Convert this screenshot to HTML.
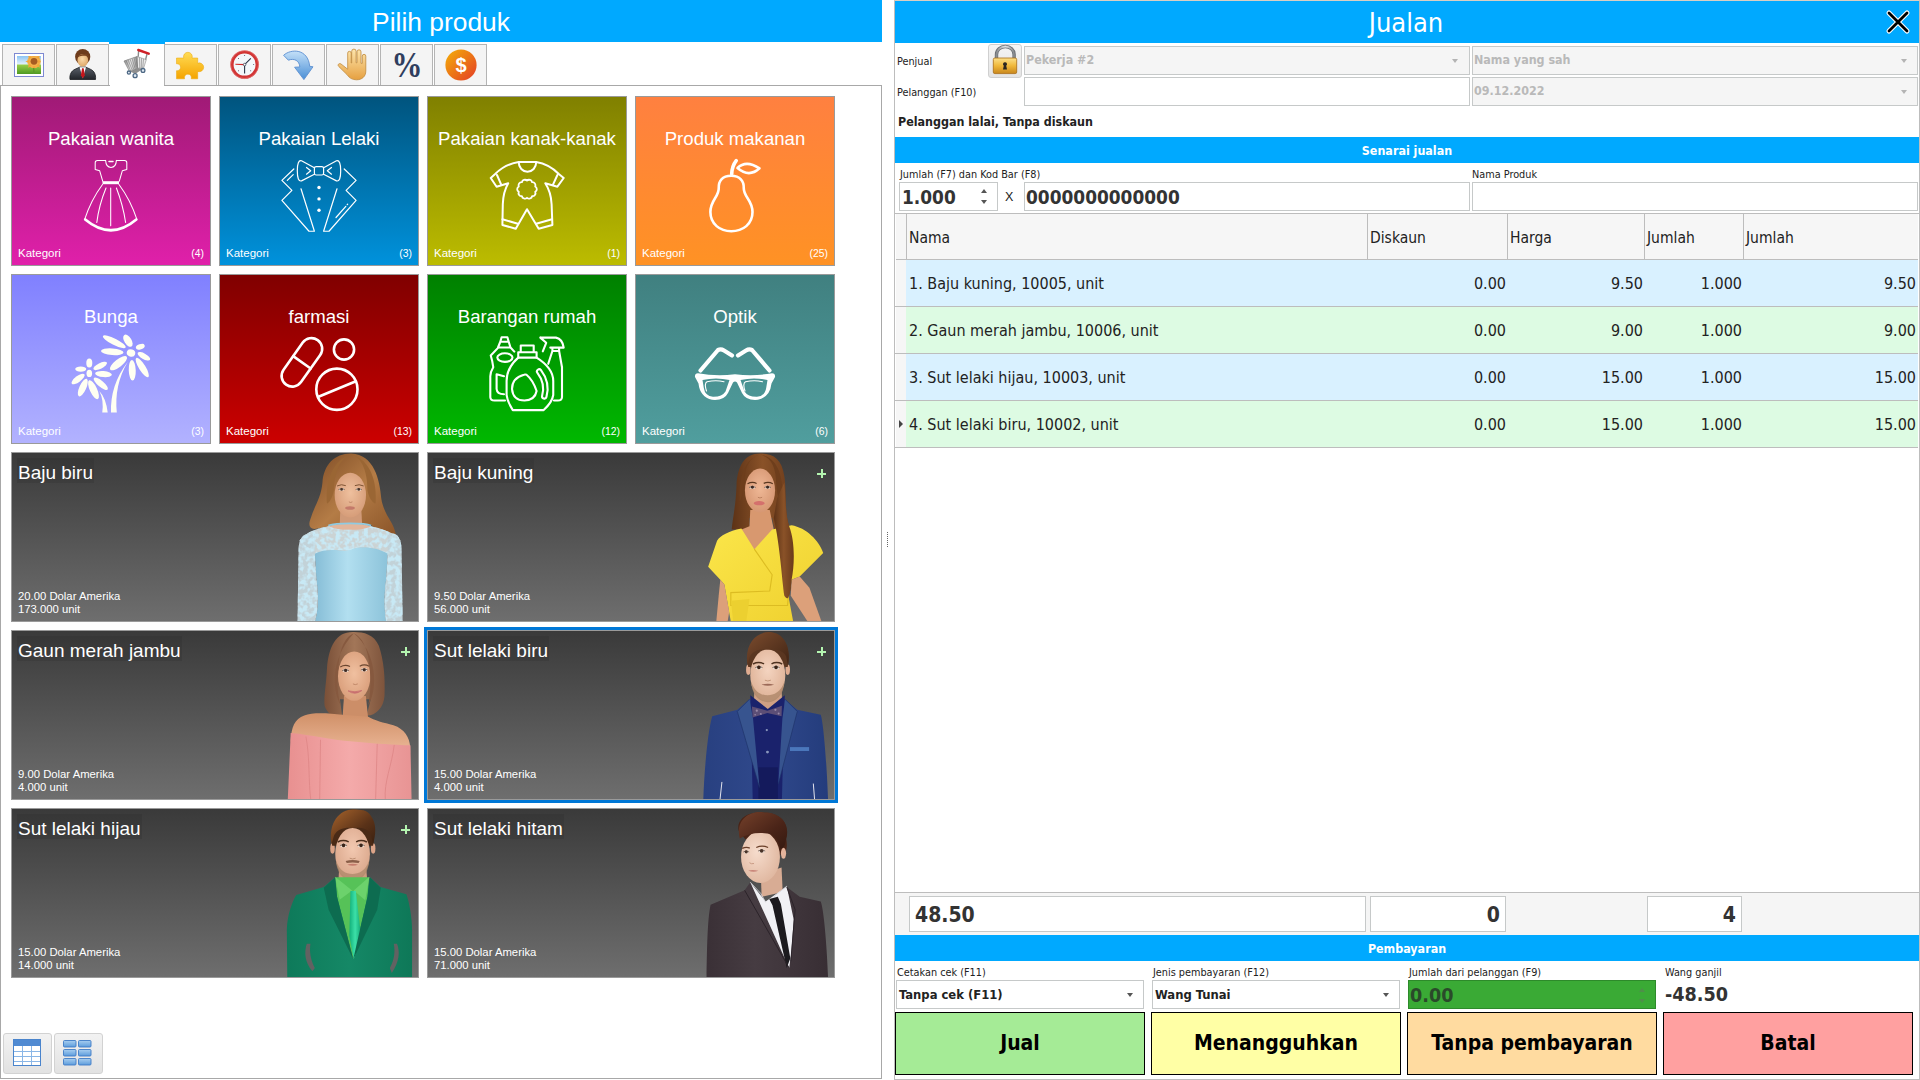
<!DOCTYPE html>
<html lang="ms">
<head>
<meta charset="utf-8">
<title>Jualan</title>
<style>
*{box-sizing:border-box;margin:0;padding:0}
html,body{width:1920px;height:1080px;overflow:hidden;background:#fff}
body{position:relative;font-family:"DejaVu Sans Condensed","Liberation Sans",sans-serif;color:#222;font-size:11px}
.abs,.abs>*{position:absolute}
.abs{left:0;top:0}
.t{white-space:nowrap;line-height:1}
.seg{font-family:"Liberation Sans",sans-serif}
.blue{background:#00a9ff}
/* left */
.tab{top:44px;width:53px;height:41px;background:#f4f4f4;border:1px solid #b4b4b4;border-bottom:none}
.cat{width:200px;height:170px;border:1px solid #9a9a9a;color:#fff;font-family:"Liberation Sans",sans-serif}
.cat .nm{position:absolute;left:0;width:198px;text-align:center;top:31px;font-size:18.6px;line-height:22px;white-space:nowrap}
.cat .kg{position:absolute;left:6px;top:150px;font-size:11.5px;line-height:12px}
.cat .ct{position:absolute;right:6px;top:151px;font-size:10.4px;line-height:12px}
.cat svg{position:absolute;left:59px;top:58px;width:80px;height:84px}
.prod{width:408px;height:170px;border:1px solid #9a9a9a;color:#fff;background:linear-gradient(#3a3a3a,#6e6e6e);font-family:"Liberation Sans",sans-serif;overflow:hidden}
.prod .nm{position:absolute;left:5px;top:5px;height:25px;font-size:19px;line-height:30px;white-space:nowrap;background:rgba(40,40,40,.22);padding:0 1px}
.prod .pr{position:absolute;left:6px;top:137px;font-size:11.3px;line-height:13px;white-space:nowrap}
.prod .plus{position:absolute;left:389px;top:16px;width:9px;height:9px}
.prod .plus:before{content:"";position:absolute;left:0;top:3.5px;width:9px;height:2px;background:#b4f5b0}
.prod .plus:after{content:"";position:absolute;left:3.5px;top:0;width:2px;height:9px;background:#b4f5b0}
.prod svg.ph{position:absolute;top:0;height:168px}
/* right */
.inp{background:#fff;border:1px solid #c6c9c9}
.dis{background:#f5f5f5;border:1px solid #c6c9c9}
.lbl{font-size:10.8px;color:#222;white-space:nowrap;line-height:13px}
.arr{width:0;height:0;border-left:3.5px solid transparent;border-right:3.5px solid transparent;border-top:4px solid #555}
.arr.g{border-top-color:#b4b4b4}
.hd{font-size:15.5px;line-height:18px;color:#222;white-space:nowrap}
.row{left:906px;width:1012px;height:46px}
.cell{font-size:16px;line-height:20px;white-space:nowrap;color:#222}
.r{text-align:right}
.btn{top:1012px;width:250px;height:63px;border:1px solid #000;font-weight:bold;font-size:21px;line-height:61px;text-align:center;color:#000}
</style>
</head>
<body>
<!-- ================= LEFT PANEL ================= -->
<div class="abs" id="left">
  <div class="blue" style="left:0;top:0;width:882px;height:42px"></div>
  <div class="t seg" style="left:0;top:6px;width:882px;text-align:center;color:#fff;font-size:26.4px;line-height:32px">Pilih produk</div>
  <div class="blue" style="left:109px;top:42px;width:56px;height:2px"></div>
  <div style="left:0;top:85px;width:882px;height:994px;border:1px solid #a8a8a8"></div>
  <div id="tabs" class="abs">
    <div class="tab" style="left:2px"></div>
    <div class="tab" style="left:56px"></div>
    <div class="tab" style="left:110px;width:54px;background:#fff;border:none;height:43px"></div>
    <div class="tab" style="left:164px"></div>
    <div class="tab" style="left:218px"></div>
    <div class="tab" style="left:272px"></div>
    <div class="tab" style="left:326px"></div>
    <div class="tab" style="left:380px"></div>
    <div class="tab" style="left:434px"></div>
  </div>
  <svg id="tabicons" style="left:0;top:44px" width="490" height="42" viewBox="0 44 490 42">
    <defs>
      <linearGradient id="gsky" x1="0" y1="0" x2="0" y2="1"><stop offset="0" stop-color="#8cc4f2"/><stop offset="1" stop-color="#eaf5ff"/></linearGradient>
      <linearGradient id="ggrass" x1="0" y1="0" x2="0" y2="1"><stop offset="0" stop-color="#9ad04a"/><stop offset="1" stop-color="#4e9a22"/></linearGradient>
      <linearGradient id="gsuit" x1="0" y1="0" x2="0" y2="1"><stop offset="0" stop-color="#5a606a"/><stop offset="1" stop-color="#22252a"/></linearGradient>
      <radialGradient id="gface" cx=".45" cy=".4" r=".7"><stop offset="0" stop-color="#fbd9a8"/><stop offset="1" stop-color="#d9a060"/></radialGradient>
      <linearGradient id="gpuz" x1="0" y1="0" x2="0" y2="1"><stop offset="0" stop-color="#ffdc55"/><stop offset="1" stop-color="#f5a400"/></linearGradient>
      <linearGradient id="garrow" x1="0" y1="0" x2="0" y2="1"><stop offset="0" stop-color="#c4e0f8"/><stop offset="1" stop-color="#4a8fd6"/></linearGradient>
      <linearGradient id="ghand" x1="0" y1="0" x2="0" y2="1"><stop offset="0" stop-color="#fde6ae"/><stop offset="1" stop-color="#e6a040"/></linearGradient>
      <linearGradient id="gcoin" x1="0" y1="0" x2="1" y2="1"><stop offset="0" stop-color="#f4b008"/><stop offset="1" stop-color="#e43c26"/></linearGradient>
      <linearGradient id="gcart" x1="0" y1="0" x2="1" y2="0"><stop offset="0" stop-color="#8a8a8a"/><stop offset=".5" stop-color="#e8e8e8"/><stop offset="1" stop-color="#9a9a9a"/></linearGradient>
    </defs>
    <!-- picture -->
    <rect x="14.5" y="53.5" width="29" height="23" fill="#fff" stroke="#7d89d2"/>
    <rect x="17" y="56" width="24" height="9" fill="url(#gsky)"/>
    <rect x="17" y="64.5" width="24" height="9.5" fill="url(#ggrass)"/>
    <clipPath id="cpic"><rect x="17" y="56" width="24" height="18"/></clipPath><g fill="#f2a53a" clip-path="url(#cpic)"><circle cx="34" cy="61.5" r="6.8" fill="#f4b24a"/><path d="M34 52.8l1.6 4h-3.2zM34 70.2l1.6-4h-3.2zM25.3 61.5l4 1.6v-3.2zM41 61.5l-3 1.6v-3.2zM27.8 55.3l4 1.8-2.2 2.2zM40.2 55.3l-4 1.8 2.2 2.2zM27.8 67.7l4-1.8-2.2-2.2zM40.2 67.7l-4-1.8 2.2-2.2z"/></g>
    <circle cx="34" cy="61.3" r="3.4" fill="#a65c22"/>
    <rect x="33" y="68" width="1.6" height="6" fill="#5c9a2a"/>
    <!-- person -->
    <path d="M70 79.5c-.6-5 1.4-8.600 5-10.200l5-2.300h5.500l5 2.300c3.600 1.600 5.600 5.200 5 10.200z" fill="url(#gsuit)" stroke="#1c1e22" stroke-width=".8"/>
    <path d="M79.600 67.200l3.200 11 3.200-11z" fill="#fff"/>
    <path d="M82 68.200h1.700l1.100 7-1.950 3.300-1.950-3.300z" fill="#c4161c"/>
    <ellipse cx="82.700" cy="56.800" rx="7.600" ry="7.700" fill="#6e3c1c"/>
    <ellipse cx="82.800" cy="60.300" rx="5.300" ry="6.300" fill="url(#gface)"/>
    <path d="M76.500 58c2-3.500 6-4.500 9.500-4 2 .5 3 2 3.200 4-2-2-4-2.500-6.500-2.200-2.600.3-4.500 1-6.200 2.200z" fill="#7a4420"/>
    <!-- cart -->
    <path d="M129.500 71.500L137.500 68L143.500 68.500L135.500 73.800Z" fill="#8e8e8e"/>
    <path d="M137 56.500L146.300 59.600L143.500 68.500L137.500 68Z" fill="#e9e9e9" stroke="#8a8a8a" stroke-width=".6"/>
    <path d="M124 61L137 56.500L137.500 68L129.500 71.500Z" fill="url(#gcart)" stroke="#777" stroke-width=".6"/>
    <path d="M126 60.400l4.800 10.600M128 59.700l4.200 10.300M130 59l3.600 10.100M132 58.300l3 9.900M134 57.600l2.300 9.800M135.800 57l1.400 9.500M139.500 57.500l.3 10.600M141.500 58.200l-.2 10.200M143.500 58.900l-.8 9.500" stroke="#6f6f6f" stroke-width=".55" fill="none"/>
    <path d="M138.600 50.900L138.200 56.800M147 54L145.600 59.600" stroke="#8c8c8c" stroke-width="1.400" fill="none"/>
    <path d="M138.300 50L148.700 53.600" stroke="#cf2027" stroke-width="2.500" stroke-linecap="round"/>
    <g fill="#dfe9f2" stroke="#4d6884" stroke-width="1.300"><circle cx="135.100" cy="75.700" r="2"/><circle cx="143" cy="70.400" r="1.900"/><circle cx="128.900" cy="72.600" r="1.600"/></g>
    <!-- puzzle -->
    <path d="M176.500 58h7.200a4.400 4.400 0 1 1 8.400 0h5.600v5.200a4.400 4.400 0 1 1 0 8.200v7.400h-6.500a3.500 3.500 0 1 0-6.600 0h-8.100v-8.100a3.500 3.500 0 1 0 0-6.900z" fill="url(#gpuz)" stroke="#eaa400" stroke-width=".5"/>
    <!-- clock -->
    <circle cx="244.600" cy="64.600" r="12.600" fill="#f3f7fb" stroke="#d23636" stroke-width="3.200"/>
    <circle cx="244.600" cy="64.600" r="14" fill="none" stroke="#e88080" stroke-width=".6"/>
    <path d="M244.600 64.600L235.400 64.300" stroke="#d02828" stroke-width="1.100"/>
    <path d="M244.600 64.600L250.800 58.400M244.600 64.600V73.400" stroke="#2a3548" stroke-width="1.100"/>
    <circle cx="244.600" cy="64.600" r="1.300" fill="#fff" stroke="#2a3548" stroke-width=".7"/>
    <g fill="#445"><circle cx="244.600" cy="55.500" r=".5"/><circle cx="253.700" cy="64.600" r=".5"/><circle cx="238.500" cy="58.500" r=".5"/><circle cx="238.500" cy="70.700" r=".5"/><circle cx="250.700" cy="70.700" r=".5"/></g>
    <!-- arrow -->
    <path d="M283.600 55.300C291 48.500 308 48.500 309.700 66.300L313 66.800L303.900 79.600L294.600 67.200L299.800 67C299.500 60.500 294 58 288.400 60.200Z" fill="url(#garrow)" stroke="#5b8fd0" stroke-width=".9" stroke-linejoin="round"/>
    <!-- hand -->
    <path d="M347.700 66v-12.900a1.750 1.750 0 0 1 3.500 0v9.900h.5v-11.700a2.200 2.200 0 0 1 4.400 0v11.500h.9v-11a2 2 0 0 1 4 0v11.500h1.300v-7.200a1.750 1.750 0 0 1 3.500 0v14.900c0 5.500-3.800 8.800-9.300 8.800-4.500 0-7.300-2-9.500-5.200l-8.300-8.200c-1.500-1.600 .3-3.600 2.200-2.500l6.800 5.300z" fill="url(#ghand)" stroke="#c08a3c" stroke-width=".8" stroke-linejoin="round"/>
    <!-- percent -->
    <text x="407" y="76.500" text-anchor="middle" font-family="Liberation Serif,serif" font-weight="bold" font-size="35" fill="#303e5e" textLength="31" lengthAdjust="spacingAndGlyphs">%</text>
    <!-- coin -->
    <circle cx="461" cy="65" r="15.600" fill="url(#gcoin)"/>
    <text x="461" y="72.300" text-anchor="middle" font-family="Liberation Sans,sans-serif" font-weight="bold" font-size="20" fill="#fff">$</text>
  </svg>
  <div id="cats" class="abs">
    <div class="cat" style="left:11px;top:96px;background:linear-gradient(#a01a76,#e020aa)"><div class="nm">Pakaian wanita</div><div class="kg">Kategori</div><div class="ct">(4)</div></div>
    <div class="cat" style="left:219px;top:96px;background:linear-gradient(#00547e,#0092dc)"><div class="nm">Pakaian Lelaki</div><div class="kg">Kategori</div><div class="ct">(3)</div></div>
    <div class="cat" style="left:427px;top:96px;background:linear-gradient(#808000,#bcbc00)"><div class="nm">Pakaian kanak-kanak</div><div class="kg">Kategori</div><div class="ct">(1)</div></div>
    <div class="cat" style="left:635px;top:96px;background:linear-gradient(#ff8040,#ff9224)"><div class="nm">Produk makanan</div><div class="kg">Kategori</div><div class="ct">(25)</div></div>
    <div class="cat" style="left:11px;top:274px;background:linear-gradient(#8080ff,#b2b2ff)"><div class="nm">Bunga</div><div class="kg">Kategori</div><div class="ct">(3)</div></div>
    <div class="cat" style="left:219px;top:274px;background:linear-gradient(#800000,#cc0000)"><div class="nm">farmasi</div><div class="kg">Kategori</div><div class="ct">(13)</div></div>
    <div class="cat" style="left:427px;top:274px;background:linear-gradient(#008000,#00b800)"><div class="nm">Barangan rumah</div><div class="kg">Kategori</div><div class="ct">(12)</div></div>
    <div class="cat" style="left:635px;top:274px;background:linear-gradient(#408080,#509e9e)"><div class="nm">Optik</div><div class="kg">Kategori</div><div class="ct">(6)</div></div>
  </div>
  <svg id="caticons" style="left:0;top:96px" width="840" height="350" viewBox="0 96 840 350" fill="none" stroke="#fff" stroke-linecap="round" stroke-linejoin="round">
    <!-- dress -->
    <g stroke-width="1.05">
      <path d="M105.600 160.400H97.500q-2.300 0-2.300 2.300V169.500l4.500 1.300 3 10.400M116.400 160.400h8.100q2.300 0 2.300 2.300v6.800l-4.500 1.300-3 10.400M105.600 160.400q.4 7 5.400 7t5.400-7"/>
      <path d="M102.500 184.500Q91 200 84.750 219.200M119 184.500Q130.500 200 136.800 219.200M110.700 188V225.800M106 188Q99 205 96.800 222.500M116.400 188Q123 205 125.600 222.500"/>
      <rect x="102.500" y="181.200" width="16.500" height="3" fill="#fff" stroke="none"/>
      <path d="M85.200 219.500Q111 241 136.300 219.500" stroke-width="2.700"/>
      <path d="M109 161.500h4" stroke-width="1.500"/>
    </g>
    <!-- tuxedo -->
    <g stroke-width="1.200">
      <rect x="314.400" y="166.700" width="9.200" height="8.300" rx="1.800"/>
      <path d="M314.400 167.800L301.500 160.800Q297.300 159.500 297.300 170.800Q297.300 182 301.500 180.900L314.400 174.200M323.600 167.800L336.500 160.800Q340.700 159.500 340.700 170.800Q340.700 182 336.500 180.900L323.600 174.200"/>
      <path d="M306.500 167.500l4.200 3.300-4.200 3.400M331.500 167.500l-4.200 3.300 4.200 3.400"/>
      <path d="M293.800 169L281.900 180.400L291.900 190.400L281.900 200.400L309 231.250H314.400L301 188.750M293.200 174.600L287.300 180.400"/>
      <path d="M344.200 169L356.100 180.400L346.100 190.400L356.100 200.400L329 231.250H323.600L337 188.750"/>
      <path d="M345.800 206.300L336 217.500M347.200 204.700l.5-.6"/>
      <g fill="#fff" stroke="none"><circle cx="319" cy="187.500" r="1.700"/><circle cx="319" cy="198.900" r="1.700"/><circle cx="319" cy="210.200" r="1.700"/></g>
    </g>
    <!-- baby suit -->
    <g stroke-width="2">
      <path d="M518.700 162Q505 164 494.900 174.200L490.750 178L496.600 186.700L508.250 183.300Q503.200 192 502.800 204.200L502.400 225L515.750 228.750L527 209.200L538.700 228.750L552.400 225L551.600 204.200Q551 192 545.300 183.300L557.400 186.700L563.700 178L559.100 174.200Q549 164 536.200 162Z"/>
      <path d="M518.700 162.300a8.750 9.400 0 0 0 17.500 0M497 175L501.200 184.600M557.400 175L553 184.600M502.400 219.200L517.800 223.750M552 219.200L536.200 223.750"/>
      <path d="M527.0 180.6A3.06 3.06 0 0 1 532.1 182.2A3.06 3.06 0 0 1 535.2 186.5A3.06 3.06 0 0 1 535.2 191.9A3.06 3.06 0 0 1 532.1 196.2A3.06 3.06 0 0 1 527.0 197.8A3.06 3.06 0 0 1 521.9 196.2A3.06 3.06 0 0 1 518.8 191.9A3.06 3.06 0 0 1 518.8 186.5A3.06 3.06 0 0 1 521.9 182.2A3.06 3.06 0 0 1 527.0 180.6Z" stroke-width="1.800"/>
    </g>
    <!-- pear -->
    <g stroke-width="2.600">
      <path d="M731.250 175.800C722 175.800 718.500 181 718.750 188C719 197 710.400 200 710.400 212C710.400 224 720 231.250 731.250 231.250C743 231.250 752.500 224 752.500 212C752.500 200 743.500 197 743.750 188C744 181 740 175.800 731.250 175.800Z"/>
      <path d="M731.700 174Q732 166 736.250 160.600" stroke-width="3.600"/>
      <path d="M737.500 168Q746 159.500 759.500 168.300Q749 178 737.500 168Z"/>
    </g>
    <!-- flowers -->
    <g fill="#fffff2" stroke="none"><ellipse cx="114.3" cy="341.75" rx="12.7" ry="3.2" transform="rotate(27 114.3 341.75)"/><ellipse cx="112.25" cy="351.75" rx="11.3" ry="3.3" transform="rotate(4 112.25 351.75)"/><ellipse cx="127.9" cy="340.7" rx="6.8" ry="3.6" transform="rotate(58 127.9 340.7)"/><ellipse cx="140.3" cy="346.75" rx="4.6" ry="2.6" transform="rotate(-20 140.3 346.75)"/><ellipse cx="143.9" cy="356.3" rx="7.1" ry="2.8" transform="rotate(30 143.9 356.3)"/><ellipse cx="142.25" cy="367.6" rx="11.3" ry="3.3" transform="rotate(58 142.25 367.6)"/><ellipse cx="132.25" cy="370.3" rx="10.3" ry="3.5" transform="rotate(88 132.25 370.3)"/><ellipse cx="118.5" cy="363.2" rx="10.5" ry="3.8" transform="rotate(-38 118.5 363.2)"/><ellipse cx="89.3" cy="363" rx="3" ry="4.6" transform="rotate(0 89.3 363)"/><ellipse cx="100.2" cy="365.9" rx="7.5" ry="2.8" transform="rotate(-27 100.2 365.9)"/><ellipse cx="103.5" cy="374.1" rx="8.4" ry="3" transform="rotate(5 103.5 374.1)"/><ellipse cx="100.8" cy="383.8" rx="9" ry="3" transform="rotate(40 100.8 383.8)"/><ellipse cx="93.5" cy="389.7" rx="10.3" ry="3.6" transform="rotate(65 93.5 389.7)"/><ellipse cx="82.8" cy="387.6" rx="9.6" ry="3.4" transform="rotate(-66 82.8 387.6)"/><ellipse cx="78.1" cy="379" rx="7.9" ry="3" transform="rotate(-37 78.1 379)"/><ellipse cx="80.75" cy="369.1" rx="5.5" ry="2.7" transform="rotate(0 80.75 369.1)"/>
      <ellipse cx="131" cy="353" rx="4.300" ry="3.600" transform="rotate(20 131 353)"/>
      <ellipse cx="89.300" cy="373.400" rx="2.800" ry="3.600"/>
      <path d="M127.700 362Q114 385 116.800 412.600H111Q110 385 127.700 362ZM99.300 391Q106 398 107.700 412.600H102.250Q104 400 99.300 391Z"/>
    </g>
    <!-- pills -->
    <g stroke-width="2.600">
      <g transform="translate(301.900 362.350) rotate(35.300)"><rect x="-10.700" y="-27.300" width="21.400" height="54.600" rx="10.700"/><path d="M-10.700 0H10.700"/></g>
      <circle cx="344" cy="349.500" r="10.100"/>
      <circle cx="336.900" cy="389.250" r="20.600"/>
      <path d="M318.500 396.800L355.300 381.500"/>
    </g>
    <!-- bottles -->
    <g stroke-width="2.100">
      <path d="M520.750 352.200V345.500H533.700V352.200M518.250 352.200H536.600V357.600H518.250Z"/>
      <path d="M518.250 357.600Q506.600 368 506.600 381V395Q507.500 402 512.800 410.100H543.700Q552.300 402 553.250 395V381Q553.250 368 536.600 357.600"/>
      <path d="M524 374.700Q512 378 512 389Q513 400.500 524.500 400.500Q535 400 536.600 391Q533 380 526.500 374.700Q525.300 374.300 524 374.700Z"/>
      <path d="M539.200 371.500Q548 383 544.300 396.300" stroke-width="6.600"/>
      <path d="M539.200 371.500Q548 383 544.300 396.300" stroke="#05a005" stroke-width="2.400"/>
      <path d="M500.300 341.750L501.600 337.200H507.400L508.700 341.750ZM500.300 341.750L498 347.500H510.500L508.700 341.750M498.250 347.600L490.750 355.500Q492.500 361 493.250 367.200Q490.300 372 490.300 376.300V397.200Q490.500 400.500 494.500 400.500H505M510.500 347.500L514.300 351.600"/>
      <ellipse cx="504.900" cy="357.600" rx="7.600" ry="4.300"/>
      <path d="M504 376.300L496.600 374.250V389Q497 394.250 504 394.250"/>
      <path d="M540.300 337.600H556Q562.500 339 563.700 347.600H550.300M540.300 337.600L546.200 342.800L542.800 351.300M552.400 347.600V351H559.100V347.600M552.400 351L548.250 363.800M559.100 351L562 367.200V397.200Q561.800 400.500 557.800 400.500H554"/>
    </g>
    <!-- glasses -->
    <g>
      <path d="M700.500 370.500L718 350Q721 348.700 724 350.500L732 355.500M769.500 370.500L752 350Q749 348.700 746 350.500L738 355.500" stroke-width="4.200"/>
      <path fill="#fff" stroke="none" fill-rule="evenodd" d="M735 374.200Q716 376.500 698 373.200Q694.500 373.500 695 377L698.500 383.500Q700 397 712 399.800Q724 401 728 393L733 382.500Q735 380.500 737 382.500L742 393Q746 401 758 399.800Q770 397 771.500 383.500L775 377Q775.500 373.500 772 373.200Q754 376.500 735 374.200ZM702.500 380Q716 377 729.500 380L725.500 391.500Q722 397 713 396.800Q705 396 703.800 388ZM767.500 380Q754 377 740.500 380L744.500 391.500Q748 397 757 396.800Q765 396 766.200 388Z"/>
      <path d="M706.500 391Q704 383.500 707 381.800Q716 379.800 724 381.800M745 391Q742.500 383.500 745.500 381.800Q754.500 379.800 762.500 381.800" stroke-width="1.100"/>
    </g>
  </svg>
  <div id="prods" class="abs">
    <div class="prod" style="left:11px;top:452px"><svg class="ph" style="left:268px;top:-3px;width:140px;height:175px" viewBox="0 0 864 1080">
      <defs>
        <linearGradient id="h1" x1="0" y1="0" x2="1" y2="1"><stop offset="0" stop-color="#7c4a24"/><stop offset=".5" stop-color="#b47c46"/><stop offset="1" stop-color="#8a5428"/></linearGradient>
        <linearGradient id="d1" x1="0" y1="0" x2="1" y2="0"><stop offset="0" stop-color="#86bdd6"/><stop offset=".45" stop-color="#b2dff0"/><stop offset="1" stop-color="#8cc3da"/></linearGradient>
        <radialGradient id="f1" cx=".5" cy=".45" r=".6"><stop offset="0" stop-color="#efc09e"/><stop offset="1" stop-color="#d49a76"/></radialGradient>
      </defs>
      <path d="M440 22C340 20 270 90 262 200C255 290 215 340 190 420C170 470 185 495 230 485L320 470L560 460L600 500C650 545 700 545 715 520C700 440 640 400 625 300C615 180 580 30 440 22Z" fill="url(#h1)"/>
      <path d="M372 370L368 480L508 480L502 370Z" fill="#d09a78"/>
      <path d="M300 470C350 450 520 450 560 470L690 560L640 660L230 660L160 560Z" fill="#e2b69c"/>
      <ellipse cx="434" cy="278" rx="97" ry="138" fill="url(#f1)"/>
      <path d="M440 28C370 50 335 140 332 250C322 300 300 330 290 330C280 200 320 60 440 28ZM440 28C510 50 540 140 540 250C550 300 575 330 590 330C600 200 560 60 440 28Z" fill="#9a6634"/>
      <g><ellipse cx="380" cy="243" rx="17" ry="8.5" fill="#efe4dc"/><circle cx="380" cy="243" r="8" fill="#4a3428"/><path d="M361 244Q380 230 399 244" stroke="#4a3428" stroke-width="4" fill="none"/><ellipse cx="486" cy="243" rx="17" ry="8.5" fill="#efe4dc"/><circle cx="486" cy="243" r="8" fill="#4a3428"/><path d="M467 244Q486 230 505 244" stroke="#4a3428" stroke-width="4" fill="none"/></g>
      <path d="M352 222Q380 208 406 220M462 220Q488 208 516 222" stroke="#7a5030" stroke-width="6" fill="none"/>
      <path d="M425 320Q435 328 447 320" stroke="#b88060" stroke-width="5" fill="none"/>
      <ellipse cx="432" cy="358" rx="30" ry="11" fill="#c47a6a"/>
      <filter id="lace" x="0" y="0" width="100%" height="100%"><feTurbulence type="fractalNoise" baseFrequency="0.035" numOctaves="2" seed="7"/><feColorMatrix values="0 0 0 0 .58  0 0 0 0 .81  0 0 0 0 .91  0 0 0 4 -1.5"/><feComposite in2="SourceGraphic" operator="in"/></filter>
      <path id="yoke1" d="M300 470C250 480 160 500 120 560L215 650C300 590 420 640 450 612C500 590 600 600 665 650L745 560C700 500 600 480 560 470C520 500 350 500 300 470Z" fill="#cbd3d4"/>
      <path d="M300 470C250 480 160 500 120 560L215 650C300 590 420 640 450 612C500 590 600 600 665 650L745 560C700 500 600 480 560 470C520 500 350 500 300 470Z" filter="url(#lace)"/>
      <path d="M215 640C300 590 420 640 450 610C500 590 600 600 665 640L655 800C640 900 645 1000 655 1060L215 1060C235 1000 240 900 225 800Z" fill="url(#d1)"/>
      <path d="M215 520C150 500 120 540 115 600L108 1060L215 1060C235 1000 240 900 225 800L215 640Z" fill="#c2d2d8"/>
      <path d="M665 520C720 500 745 540 750 600L757 1060L655 1060C645 1000 640 900 655 800L665 640Z" fill="#c2d2d8"/>
      <path d="M215 520C150 500 120 540 115 600L108 1060L215 1060C235 1000 240 900 225 800L215 640ZM665 520C720 500 745 540 750 600L757 1060L655 1060C645 1000 640 900 655 800L665 640Z" filter="url(#lace)"/>
      <path d="M298 466C350 448 520 448 562 466" stroke="#8fcbe2" stroke-width="10" fill="none"/>
    </svg><div class="nm">Baju biru</div><div class="pr">20.00 Dolar Amerika<br>173.000 unit</div></div>
    <div class="prod" style="left:427px;top:452px"><svg class="ph" style="left:268px;top:-3px;width:140px;height:175px" viewBox="0 0 864 1080">
      <defs>
        <linearGradient id="h2" x1="0" y1="0" x2="1" y2="0"><stop offset="0" stop-color="#5c3216"/><stop offset=".5" stop-color="#8a5228"/><stop offset="1" stop-color="#6a3a1a"/></linearGradient>
        <linearGradient id="d2" x1="0" y1="0" x2="1" y2="1"><stop offset="0" stop-color="#fbe64a"/><stop offset="1" stop-color="#efd02e"/></linearGradient>
        <radialGradient id="f2" cx=".5" cy=".45" r=".6"><stop offset="0" stop-color="#efb896"/><stop offset="1" stop-color="#d49470"/></radialGradient>
      </defs>
      <path d="M400 22C300 20 255 100 250 220C245 350 225 430 220 490L330 490L330 420L470 420L480 470C520 600 530 800 545 900C570 940 580 900 590 800C610 700 610 560 575 470C545 380 560 250 545 160C530 60 480 22 400 22Z" fill="url(#h2)"/>
      <path d="M335 370L330 470L270 495L360 615L480 490L455 370Z" fill="#d8986f"/>
      <ellipse cx="395" cy="250" rx="93" ry="136" fill="url(#f2)"/>
      <path d="M400 30C330 40 300 110 298 200C292 260 280 300 270 320C262 200 290 50 400 30ZM400 30C470 45 495 120 495 210C500 280 515 320 530 340C545 200 520 50 400 30Z" fill="#6e3e1c"/>
      <g><ellipse cx="348" cy="230" rx="18" ry="9.5" fill="#efe4dc"/><circle cx="348" cy="230" r="9" fill="#3a2820"/><path d="M328 231Q348 216 368 231" stroke="#3a2820" stroke-width="4" fill="none"/><ellipse cx="442" cy="230" rx="18" ry="9.5" fill="#efe4dc"/><circle cx="442" cy="230" r="9" fill="#3a2820"/><path d="M422 231Q442 216 462 231" stroke="#3a2820" stroke-width="4" fill="none"/></g>
      <path d="M318 208Q348 192 374 206M418 206Q446 192 474 208" stroke="#5a3820" stroke-width="7" fill="none"/>
      <path d="M382 292Q394 300 408 292" stroke="#b47858" stroke-width="5" fill="none"/>
      <ellipse cx="390" cy="328" rx="34" ry="13" fill="#d4706c"/>
      <path d="M280 485C200 500 150 530 130 560L75 720L150 800L175 830L215 1060L600 1060L570 900L590 800L640 780L785 635C760 560 680 480 590 465L470 490L360 612Z" fill="url(#d2)"/>
      <path d="M360 612L470 770L455 870L215 880L215 960L565 960L570 900" fill="none" stroke="#dcbc22" stroke-width="7"/>
      <path d="M215 930L330 920L310 1060L230 1060Z" fill="#ecd030"/>
      <path d="M150 800L175 830L205 1000L195 1060L125 1060L140 900Z" fill="#dca07a"/>
      <path d="M640 780L590 800L585 900L690 1060L775 1060L700 850Z" fill="#dca07a"/>
      <path d="M480 420C520 600 530 800 545 900C570 940 580 900 590 800C610 700 610 560 575 470C550 400 555 300 545 200L500 300Z" fill="url(#h2)"/>
    </svg><div class="nm">Baju kuning</div><div class="pr">9.50 Dolar Amerika<br>56.000 unit</div><div class="plus"></div></div>
    <div class="prod" style="left:11px;top:630px"><svg class="ph" style="left:268px;top:-3px;width:140px;height:175px" viewBox="0 0 864 1080">
      <defs>
        <linearGradient id="h3" x1="0" y1="0" x2="1" y2="0"><stop offset="0" stop-color="#7a5038"/><stop offset=".5" stop-color="#a27658"/><stop offset="1" stop-color="#7e543c"/></linearGradient>
        <linearGradient id="d3" x1="0" y1="0" x2="1" y2="0"><stop offset="0" stop-color="#e89090"/><stop offset=".5" stop-color="#f4aaaa"/><stop offset="1" stop-color="#e89494"/></linearGradient>
        <radialGradient id="f3" cx=".5" cy=".45" r=".6"><stop offset="0" stop-color="#f0c0a0"/><stop offset="1" stop-color="#d89c78"/></radialGradient>
        <linearGradient id="s3" x1="0" y1="0" x2="0" y2="1"><stop offset="0" stop-color="#d09068"/><stop offset="1" stop-color="#ecb898"/></linearGradient>
      </defs>
      <path d="M455 25C350 20 300 110 290 250C285 350 270 420 275 480C290 530 340 560 385 555L370 440L560 440L535 540C580 545 640 500 645 420C650 300 640 200 610 110C580 40 520 25 455 25Z" fill="url(#h3)"/>
      <path d="M395 420L385 570L545 570L530 420Z" fill="#cc8e68"/>
      <path d="M385 535C300 525 200 518 150 540C90 562 70 610 66 700L803 770L803 730C800 680 770 622 700 600C640 585 580 570 545 548Z" fill="url(#s3)"/>
      <ellipse cx="458" cy="297" rx="100" ry="152" fill="url(#f3)"/>
      <path d="M455 32C390 60 365 150 360 250C350 330 352 400 374 475C330 400 300 200 455 32ZM455 32C520 60 550 160 555 260C560 340 560 400 545 475C605 380 600 150 455 32Z" fill="#86593f"/>
      <g><ellipse cx="405" cy="262" rx="19" ry="10.5" fill="#efe4dc"/><circle cx="405" cy="262" r="10" fill="#3e2a22"/><path d="M384 263Q405 247 426 263" stroke="#3e2a22" stroke-width="4" fill="none"/><ellipse cx="520" cy="258" rx="19" ry="10.5" fill="#efe4dc"/><circle cx="520" cy="258" r="10" fill="#3e2a22"/><path d="M499 259Q520 243 541 259" stroke="#3e2a22" stroke-width="4" fill="none"/></g>
      <path d="M372 240Q402 222 432 238M492 236Q520 220 550 236" stroke="#6a4630" stroke-width="7" fill="none"/>
      <path d="M450 345Q464 354 480 345" stroke="#b88060" stroke-width="5" fill="none"/>
      <path d="M420 388Q462 418 505 386Q462 400 420 388Z" fill="#c87070" stroke="#c87070" stroke-width="5"/>
      <path d="M66 648C200 660 300 690 450 700C600 715 700 720 805 724L812 1060L48 1060Z" fill="url(#d3)"/>
      <path d="M160 670C185 800 175 950 190 1060M705 722C690 850 640 950 650 1060M250 690L245 1060M600 715L590 1060" stroke="#de8686" stroke-width="5" fill="none"/>
    </svg><div class="nm">Gaun merah jambu</div><div class="pr">9.00 Dolar Amerika<br>4.000 unit</div><div class="plus"></div></div>
    <div style="left:424px;top:627px;width:414px;height:176px;border:3px solid #0078d7"></div>
    <div class="prod" style="left:427px;top:630px"><svg class="ph" style="left:268px;top:-3px;width:140px;height:175px" viewBox="0 0 864 1080">
      <defs>
        <linearGradient id="h4" x1="0" y1="0" x2="1" y2="1"><stop offset="0" stop-color="#7c4c2e"/><stop offset="1" stop-color="#402414"/></linearGradient>
        <linearGradient id="j4" x1="0" y1="0" x2="1" y2="0"><stop offset="0" stop-color="#284080"/><stop offset=".5" stop-color="#30498c"/><stop offset="1" stop-color="#243c7c"/></linearGradient>
        <radialGradient id="f4" cx=".5" cy=".4" r=".65"><stop offset="0" stop-color="#f4d4c0"/><stop offset="1" stop-color="#dcae92"/></radialGradient>
      </defs>
      <g fill="#e0ac90"><ellipse cx="323" cy="258" rx="14" ry="32"/><ellipse cx="566" cy="258" rx="14" ry="32"/></g>
      <path d="M360 380L355 530L535 530L528 380Z" fill="#cfa084"/>
      <path d="M322 240C300 110 370 30 450 30C530 30 590 110 566 240Z" fill="#5a3620"/><ellipse cx="443" cy="292" rx="108" ry="160" fill="url(#f4)"/>
      <path d="M340 330C345 420 400 458 443 458C490 458 540 420 546 330C525 395 480 415 443 415C400 415 362 395 340 330Z" fill="#b08a6c" opacity=".85"/>
      <path d="M318 232C296 100 370 25 450 25C530 25 592 100 568 232L556 175C540 140 500 128 443 132C390 128 350 140 332 178Z" fill="url(#h4)"/>
      <g><ellipse cx="388" cy="243" rx="20" ry="11.5" fill="#efe4dc"/><circle cx="388" cy="243" r="11" fill="#3a2418"/><path d="M366 244Q388 227 410 244" stroke="#3a2418" stroke-width="4" fill="none"/><ellipse cx="494" cy="243" rx="20" ry="11.5" fill="#efe4dc"/><circle cx="494" cy="243" r="11" fill="#3a2418"/><path d="M472 244Q494 227 516 244" stroke="#3a2418" stroke-width="4" fill="none"/></g>
      <path d="M352 222Q388 205 420 222M466 222Q496 205 532 222" stroke="#4e3220" stroke-width="9" fill="none"/>
      <path d="M425 322Q443 332 462 322" stroke="#b88a6c" stroke-width="5" fill="none"/>
      <path d="M405 350Q443 338 482 350Q443 362 405 350Z" fill="#9c6a58"/>
      <path d="M100 545L255 505L330 440L443 520L550 440L625 505L770 535C790 600 810 900 815 1060L45 1060C50 900 70 650 100 545Z" fill="url(#j4)"/>
      <path d="M335 415L443 500L548 415L530 1060L350 1060Z" fill="#1a226c"/>
      <path d="M385 860L505 860L505 1060L385 1060Z" fill="#141a5c"/>
      <path d="M330 440L255 515L392 985L352 560ZM550 440L625 515L508 965L533 560Z" fill="#37548f"/>
      <path d="M330 440L255 515L392 985M550 440L625 515L508 965" fill="none" stroke="#1e3268" stroke-width="4"/>
      <path d="M345 485L440 510L530 480L528 545L440 525L350 552Z" fill="#5c4e76"/>
      <g fill="#9a8aa8"><circle cx="375" cy="510" r="7"/><circle cx="400" cy="530" r="6"/><circle cx="490" cy="505" r="7"/><circle cx="510" cy="528" r="6"/><circle cx="365" cy="535" r="5"/></g>
      <rect x="580" y="735" width="118" height="24" fill="#4b77bb"/>
      <g fill="#8a96bc"><circle cx="437" cy="630" r="7"/><circle cx="441" cy="766" r="9"/></g>
      <path d="M160 950L148 1060M724 960L732 1060" stroke="#e8e8f0" stroke-width="6"/>
    </svg><div class="nm">Sut lelaki biru</div><div class="pr">15.00 Dolar Amerika<br>4.000 unit</div><div class="plus"></div></div>
    <div class="prod" style="left:11px;top:808px"><svg class="ph" style="left:268px;top:-3px;width:140px;height:175px" viewBox="0 0 864 1080">
      <defs>
        <linearGradient id="h5" x1="0" y1="0" x2="1" y2="1"><stop offset="0" stop-color="#a8642c"/><stop offset=".6" stop-color="#5a3218"/><stop offset="1" stop-color="#3a2010"/></linearGradient>
        <linearGradient id="j5" x1="0" y1="0" x2="1" y2="0"><stop offset="0" stop-color="#0e7a5a"/><stop offset=".5" stop-color="#158866"/><stop offset="1" stop-color="#0e7858"/></linearGradient>
        <radialGradient id="f5" cx=".5" cy=".4" r=".65"><stop offset="0" stop-color="#f2c8b0"/><stop offset="1" stop-color="#d8a488"/></radialGradient>
        <linearGradient id="t5" x1="0" y1="0" x2="1" y2="0"><stop offset="0" stop-color="#12b07a"/><stop offset=".5" stop-color="#3ce0a8"/><stop offset="1" stop-color="#10a874"/></linearGradient>
      </defs>
      <g fill="#dca488"><ellipse cx="324" cy="262" rx="14" ry="32"/><ellipse cx="575" cy="262" rx="14" ry="32"/></g>
      <path d="M365 380L360 480L540 480L532 380Z" fill="#cc9a7e"/>
      <path d="M322 245C300 110 370 25 450 22C540 25 600 110 574 245Z" fill="#4a2a16"/>
      <ellipse cx="448" cy="295" rx="107" ry="160" fill="url(#f5)"/>
      <path d="M345 335C350 425 405 462 448 462C495 462 545 425 551 335C530 400 485 420 448 420C405 420 367 400 345 335Z" fill="#b08a6c" opacity=".8"/>
      <path d="M318 235C296 100 370 22 450 22C480 22 540 20 560 60C600 110 590 180 574 238L560 175C545 140 505 130 448 135C395 130 355 142 334 180Z" fill="url(#h5)"/>
      <g><ellipse cx="392" cy="243" rx="20" ry="11.5" fill="#efe4dc"/><circle cx="392" cy="243" r="11" fill="#3a2418"/><path d="M370 244Q392 227 414 244" stroke="#3a2418" stroke-width="4" fill="none"/><ellipse cx="500" cy="243" rx="20" ry="11.5" fill="#efe4dc"/><circle cx="500" cy="243" r="11" fill="#3a2418"/><path d="M478 244Q500 227 522 244" stroke="#3a2418" stroke-width="4" fill="none"/></g>
      <path d="M356 222Q392 205 424 222M470 222Q500 205 536 222" stroke="#4a2e1c" stroke-width="9" fill="none"/>
      <path d="M430 322Q448 332 467 322" stroke="#b48468" stroke-width="5" fill="none"/>
      <path d="M405 340Q448 328 492 340L485 352Q448 344 412 352Z" fill="#8a5e48"/>
      <path d="M415 362Q448 352 482 362Q448 376 415 362Z" fill="#c47c6c"/>
      <path d="M100 550L270 500L340 440L450 940L555 440L620 500L780 545C800 600 815 700 815 760L815 1060L45 1060L42 760C45 680 70 600 100 550Z" fill="url(#j5)"/>
      <path d="M340 440L550 440L540 560L452 945L352 560Z" fill="#56c258"/>
      <path d="M340 436L445 522L368 578ZM552 436L455 522L526 582Z" fill="#6cd26c"/>
      <path d="M435 525L468 525L500 800L455 945L428 800Z" fill="url(#t5)"/>
      <path d="M340 440L270 505L300 640L452 945L352 560ZM555 440L622 505L600 640L452 945L540 560Z" fill="#0d6c50"/>
      <path d="M165 850C150 900 150 960 200 1020L215 1000C190 950 180 900 188 850ZM722 850C742 900 737 960 690 1030L678 1000C705 950 712 900 702 850Z" fill="#626262"/>
    </svg><div class="nm">Sut lelaki hijau</div><div class="pr">15.00 Dolar Amerika<br>14.000 unit</div><div class="plus"></div></div>
    <div class="prod" style="left:427px;top:808px"><svg class="ph" style="left:268px;top:-3px;width:140px;height:175px" viewBox="0 0 864 1080">
      <defs>
        <linearGradient id="h6" x1="0" y1="0" x2="1" y2="1"><stop offset="0" stop-color="#74402a"/><stop offset=".6" stop-color="#4a2418"/><stop offset="1" stop-color="#361a10"/></linearGradient>
        <linearGradient id="j6" x1="0" y1="0" x2="1" y2="0"><stop offset="0" stop-color="#3a3036"/><stop offset=".4" stop-color="#463c42"/><stop offset="1" stop-color="#382e34"/></linearGradient>
        <radialGradient id="f6" cx=".4" cy=".4" r=".7"><stop offset="0" stop-color="#f6dccc"/><stop offset="1" stop-color="#deb49c"/></radialGradient>
      </defs>
      <path d="M262 150C250 60 350 30 420 42C520 40 580 110 556 200C565 240 560 270 548 300L470 300L300 200Z" fill="#4a2416"/>
      <ellipse cx="540" cy="292" rx="16" ry="34" fill="#e4b49c"/>
      <path d="M400 420L405 560L535 530L528 380Z" fill="#d8ac94"/>
      <ellipse cx="398" cy="315" rx="120" ry="160" fill="url(#f6)"/>
      <path d="M270 200C240 80 340 25 420 40C520 38 585 110 556 205C550 240 545 262 520 262C510 220 490 190 470 175C400 160 330 165 270 200Z" fill="url(#h6)"/>
      <g><ellipse cx="310" cy="283" rx="16" ry="10.5" fill="#efe4dc"/><circle cx="310" cy="283" r="10" fill="#4a3428"/><path d="M292 284Q310 268 328 284" stroke="#4a3428" stroke-width="4" fill="none"/><ellipse cx="405" cy="277" rx="20" ry="11.5" fill="#efe4dc"/><circle cx="405" cy="277" r="11" fill="#4a3428"/><path d="M383 278Q405 261 427 278" stroke="#4a3428" stroke-width="4" fill="none"/></g>
      <path d="M285 262Q310 250 332 260M372 256Q408 240 445 256" stroke="#6a3e28" stroke-width="8" fill="none"/>
      <path d="M330 350Q340 360 358 355" stroke="#c09078" stroke-width="5" fill="none"/>
      <path d="M322 398Q352 390 385 400Q352 412 322 398Z" fill="#c88478"/>
      <path d="M90 610L300 520L335 470L575 1000L560 500L640 560L770 590C790 640 810 900 815 1060L65 1060C68 900 70 700 90 610Z" fill="url(#j6)"/>
      <path d="M335 470L430 590L560 495L603 700L588 910L575 1000Z" fill="#f1f1f5"/>
      <path d="M335 470L400 540L430 595M560 495L480 560" stroke="#d4d4dc" stroke-width="5" fill="none"/>
      <path d="M452 574L505 560L524 605L582 940L560 1000L472 612Z" fill="#1c1a1e"/>
      <path d="M300 520L575 1000M560 500L612 640L585 960" stroke="#2a2228" stroke-width="6" fill="none"/>
    </svg><div class="nm">Sut lelaki hitam</div><div class="pr">15.00 Dolar Amerika<br>71.000 unit</div></div>
    <div id="vbtn1" style="left:3px;top:1033px;width:49px;height:41px;border:1px solid #d2d2d2;border-radius:3px;background:linear-gradient(#f2f2f2,#e2e2e2)"></div>
    <div id="vbtn2" style="left:54px;top:1033px;width:49px;height:41px;border:1px solid #d2d2d2;border-radius:3px;background:linear-gradient(#f2f2f2,#e2e2e2)"></div>
<svg style="left:0;top:1033px" width="110" height="42" viewBox="0 1033 110 42">
      <defs><linearGradient id="gtile" x1="0" y1="0" x2="0" y2="1"><stop offset="0" stop-color="#a8cef0"/><stop offset="1" stop-color="#5c9cdc"/></linearGradient></defs>
      <rect x="13.500" y="1039.500" width="27" height="26" fill="#fff" stroke="#4a84cc"/>
      <rect x="14" y="1040" width="26" height="6" fill="#4f8ad2"/>
      <path d="M14 1051.500h26M14 1056.500h26M14 1061.500h26M22.500 1046v19M31.500 1046v19" stroke="#8ab6e6" stroke-width="1"/>
      <g fill="url(#gtile)" stroke="#3e7cc6" stroke-width=".9"><rect x="63.500" y="1040.500" width="12.500" height="6.500" rx="1"/><rect x="78.500" y="1040.500" width="12.500" height="6.500" rx="1"/><rect x="63.500" y="1049.500" width="12.500" height="6.500" rx="1"/><rect x="78.500" y="1049.500" width="12.500" height="6.500" rx="1"/><rect x="63.500" y="1058.500" width="12.500" height="6.500" rx="1"/><rect x="78.500" y="1058.500" width="12.500" height="6.500" rx="1"/></g>
    </svg>
  </div>
</div>
<div class="abs"><div style="left:887px;top:532px;width:1px;height:15px;background:repeating-linear-gradient(#666 0 1px,#fff 1px 2px)"></div></div>
<!-- ================= RIGHT PANEL ================= -->
<div class="abs" id="right">
  <div style="left:894px;top:0;width:1026px;height:1080px;border:1px solid #bdbdbd;border-top-color:#d8cfc4"></div>
  <div class="blue" style="left:895px;top:1px;width:1024px;height:42px"></div>
  <div class="t" style="left:894px;top:7px;width:1024px;text-align:center;color:#fff;font-size:27px;line-height:32px">Jualan</div>
  <svg style="left:1885px;top:9px" width="26" height="26" viewBox="0 0 26 26"><path d="M4 4L22 22M22 4L4 22" stroke="#fff" stroke-width="5" stroke-linecap="round"/><path d="M4 4L22 22M22 4L4 22" stroke="#000" stroke-width="2.8" stroke-linecap="round"/></svg>
  <div class="lbl" style="left:897px;top:55px">Penjual</div>
  <div id="lock" style="left:988px;top:44px;width:34px;height:34px;border:1px solid #d0d0d0;border-radius:3px;background:linear-gradient(#f4f4f4,#e4e4e4)"></div>
  <svg style="left:988px;top:43px" width="34" height="35" viewBox="988 43 34 35">
    <defs><linearGradient id="glock" x1="0" y1="0" x2="0" y2="1"><stop offset="0" stop-color="#fbe08a"/><stop offset=".5" stop-color="#f0b83a"/><stop offset="1" stop-color="#c8861c"/></linearGradient>
    <linearGradient id="gshk" x1="0" y1="0" x2="1" y2="0"><stop offset="0" stop-color="#8a8e92"/><stop offset=".5" stop-color="#e4e6e8"/><stop offset="1" stop-color="#84888c"/></linearGradient></defs>
    <path d="M996.500 59V54.500a8.800 8 0 0 1 17.600 0V59" fill="none" stroke="#6a6e74" stroke-width="3.400"/>
    <path d="M996.500 59V54.500a8.800 8 0 0 1 17.600 0V59" fill="none" stroke="url(#gshk)" stroke-width="1.800"/>
    <rect x="993.300" y="58" width="23.400" height="15.600" rx="1.500" fill="url(#glock)" stroke="#a86c14" stroke-width=".8"/>
    <path d="M1005 62.200a2 2 0 0 1 1.200 3.600l.8 3.800h-4l.8-3.800a2 2 0 0 1 1.200-3.600z" fill="#2a2620"/>
  </svg>
  <div class="dis" style="left:1024px;top:46px;width:446px;height:29px"></div>
  <div class="t" style="left:1026px;top:54px;font-size:12.4px;font-weight:bold;color:#b9b9b9">Pekerja #2</div>
  <div class="arr g" style="left:1452px;top:59px"></div>
  <div class="dis" style="left:1472px;top:46px;width:446px;height:29px"></div>
  <div class="t" style="left:1474px;top:54px;font-size:12.4px;font-weight:bold;color:#b9b9b9">Nama yang sah</div>
  <div class="arr g" style="left:1901px;top:59px"></div>
  <div class="lbl" style="left:897px;top:86px">Pelanggan (F10)</div>
  <div class="inp" style="left:1024px;top:77px;width:446px;height:29px"></div>
  <div class="dis" style="left:1472px;top:77px;width:446px;height:29px"></div>
  <div class="t" style="left:1474px;top:85px;font-size:12.4px;font-weight:bold;color:#b9b9b9">09.12.2022</div>
  <div class="arr g" style="left:1901px;top:90px"></div>
  <div class="t" style="left:898px;top:116px;font-size:12.4px;font-weight:bold;color:#222">Pelanggan lalai, Tanpa diskaun</div>
  <div class="blue" style="left:895px;top:137px;width:1024px;height:26px"></div>
  <div class="t" style="left:895px;top:145px;width:1024px;text-align:center;color:#fff;font-size:12.4px;font-weight:bold">Senarai jualan</div>
  <div class="lbl" style="left:900px;top:168px">Jumlah (F7) dan Kod Bar (F8)</div>
  <div class="lbl" style="left:1472px;top:168px">Nama Produk</div>
  <div class="inp" style="left:899px;top:182px;width:99px;height:29px"></div>
  <div class="t" style="left:902px;top:188px;font-size:18.9px;font-weight:bold;color:#333">1.000</div>
  <div class="arr" style="left:981px;top:189px;transform:rotate(180deg)"></div>
  <div class="arr" style="left:981px;top:200px"></div>
  <div class="t seg" style="left:1005px;top:191px;font-size:12.5px;color:#222">X</div>
  <div class="inp" style="left:1024px;top:182px;width:446px;height:29px"></div>
  <div class="t" style="left:1026px;top:188px;font-size:18.9px;font-weight:bold;color:#333">0000000000000</div>
  <div class="inp" style="left:1472px;top:182px;width:446px;height:29px"></div>
  <!-- grid -->
  <div style="left:895px;top:213px;width:1024px;height:722px;border-top:1px solid #bdbdbd;background:#fff"></div>
  <div style="left:896px;top:214px;width:1022px;height:45px;background:#f6f6f6"></div>
  <div style="left:896px;top:259px;width:1022px;height:1px;background:#bdbdbd"></div>
  <div style="left:896px;top:260px;width:10px;height:187px;background:#f6f6f6"></div>
  <div style="left:906px;top:214px;width:1px;height:234px;background:#bdbdbd"></div>
  <div style="left:1367px;top:214px;width:1px;height:45px;background:#bdbdbd"></div>
  <div style="left:1507px;top:214px;width:1px;height:45px;background:#bdbdbd"></div>
  <div style="left:1644px;top:214px;width:1px;height:45px;background:#bdbdbd"></div>
  <div style="left:1743px;top:214px;width:1px;height:45px;background:#bdbdbd"></div>
  <div class="hd" style="left:909px;top:229px">Nama</div>
  <div class="hd" style="left:1370px;top:229px">Diskaun</div>
  <div class="hd" style="left:1510px;top:229px">Harga</div>
  <div class="hd" style="left:1647px;top:229px">Jumlah</div>
  <div class="hd" style="left:1746px;top:229px">Jumlah</div>
  <div class="row" style="top:260px;background:#d9f1ff"></div>
  <div style="left:895px;top:306px;width:1023px;height:1px;background:#bdbdbd"></div>
  <div class="cell" style="left:909px;top:274px">1. Baju kuning, 10005, unit</div>
  <div class="cell r" style="left:1367px;width:139px;top:274px">0.00</div>
  <div class="cell r" style="left:1507px;width:136px;top:274px">9.50</div>
  <div class="cell r" style="left:1644px;width:98px;top:274px">1.000</div>
  <div class="cell r" style="left:1743px;width:173px;top:274px">9.50</div>
  <div class="row" style="top:307px;background:#ddfbe3"></div>
  <div style="left:895px;top:353px;width:1023px;height:1px;background:#bdbdbd"></div>
  <div class="cell" style="left:909px;top:321px">2. Gaun merah jambu, 10006, unit</div>
  <div class="cell r" style="left:1367px;width:139px;top:321px">0.00</div>
  <div class="cell r" style="left:1507px;width:136px;top:321px">9.00</div>
  <div class="cell r" style="left:1644px;width:98px;top:321px">1.000</div>
  <div class="cell r" style="left:1743px;width:173px;top:321px">9.00</div>
  <div class="row" style="top:354px;background:#d9f1ff"></div>
  <div style="left:895px;top:400px;width:1023px;height:1px;background:#bdbdbd"></div>
  <div class="cell" style="left:909px;top:368px">3. Sut lelaki hijau, 10003, unit</div>
  <div class="cell r" style="left:1367px;width:139px;top:368px">0.00</div>
  <div class="cell r" style="left:1507px;width:136px;top:368px">15.00</div>
  <div class="cell r" style="left:1644px;width:98px;top:368px">1.000</div>
  <div class="cell r" style="left:1743px;width:173px;top:368px">15.00</div>
  <div class="row" style="top:401px;background:#ddfbe3"></div>
  <div style="left:895px;top:447px;width:1023px;height:1px;background:#bdbdbd"></div>
  <div class="cell" style="left:909px;top:415px">4. Sut lelaki biru, 10002, unit</div>
  <div class="cell r" style="left:1367px;width:139px;top:415px">0.00</div>
  <div class="cell r" style="left:1507px;width:136px;top:415px">15.00</div>
  <div class="cell r" style="left:1644px;width:98px;top:415px">1.000</div>
  <div class="cell r" style="left:1743px;width:173px;top:415px">15.00</div>
  <div style="left:899px;top:420px;width:0;height:0;border-top:4px solid transparent;border-bottom:4px solid transparent;border-left:4px solid #444"></div>
  <!-- footer -->
  <div style="left:895px;top:892px;width:1024px;height:43px;background:#f5f5f5;border-top:1px solid #bdbdbd"></div>
  <div class="inp" style="left:909px;top:896px;width:457px;height:36px"></div>
  <div class="t" style="left:915px;top:905px;font-size:21px;font-weight:bold;color:#333">48.50</div>
  <div class="inp" style="left:1370px;top:896px;width:136px;height:36px"></div>
  <div class="t r" style="left:1370px;width:130px;top:905px;font-size:21px;font-weight:bold;color:#333">0</div>
  <div class="inp" style="left:1647px;top:896px;width:95px;height:36px"></div>
  <div class="t r" style="left:1647px;width:89px;top:905px;font-size:21px;font-weight:bold;color:#333">4</div>
  <div class="blue" style="left:895px;top:935px;width:1024px;height:26px"></div>
  <div class="t" style="left:895px;top:943px;width:1024px;text-align:center;color:#fff;font-size:12.4px;font-weight:bold">Pembayaran</div>
  <div class="lbl" style="left:897px;top:966px">Cetakan cek (F11)</div>
  <div class="lbl" style="left:1153px;top:966px">Jenis pembayaran (F12)</div>
  <div class="lbl" style="left:1409px;top:966px">Jumlah dari pelanggan (F9)</div>
  <div class="lbl" style="left:1665px;top:966px">Wang ganjil</div>
  <div class="inp" style="left:896px;top:980px;width:248px;height:29px"></div>
  <div class="t" style="left:899px;top:989px;font-size:12.9px;font-weight:bold;color:#222">Tanpa cek (F11)</div>
  <div class="arr" style="left:1127px;top:993px"></div>
  <div class="inp" style="left:1152px;top:980px;width:248px;height:29px"></div>
  <div class="t" style="left:1155px;top:989px;font-size:12.9px;font-weight:bold;color:#222">Wang Tunai</div>
  <div class="arr" style="left:1383px;top:993px"></div>
  <div style="left:1408px;top:980px;width:248px;height:29px;background:#3aaa35;border:1px solid #2d8a2a"></div>
  <div class="t" style="left:1410px;top:986px;font-size:19.6px;font-weight:bold;color:#2a4a2a">0.00</div>
  <div class="arr" style="left:1639px;top:988px;transform:rotate(180deg);border-top-color:#4f8f4a"></div>
  <div class="arr" style="left:1639px;top:999px;border-top-color:#4f8f4a"></div>
  <div class="t" style="left:1665px;top:985px;font-size:19.6px;font-weight:bold;color:#333">-48.50</div>
  <div class="btn" style="left:895px;background:#a5eb96">Jual</div>
  <div class="btn" style="left:1151px;background:#ffffa5">Menangguhkan</div>
  <div class="btn" style="left:1407px;background:#ffdba0">Tanpa pembayaran</div>
  <div class="btn" style="left:1663px;background:#ffa0a0">Batal</div>
</div>
</body>
</html>
